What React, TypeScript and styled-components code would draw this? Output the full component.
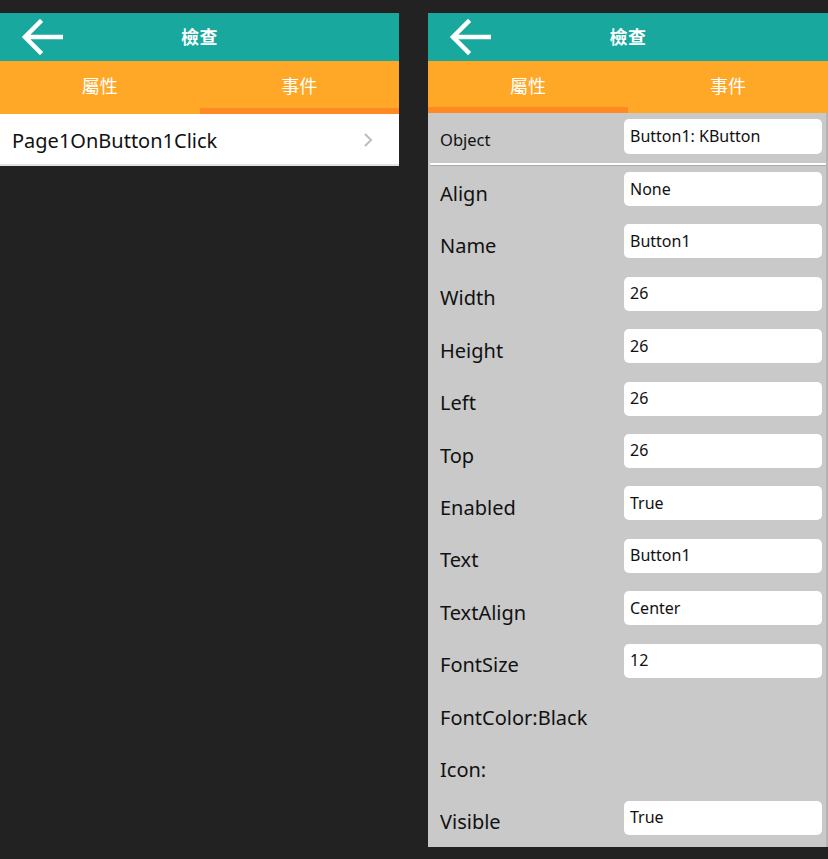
import React from "react";
import styled, { createGlobalStyle } from "styled-components";

const Global = createGlobalStyle`
  html, body { margin: 0; padding: 0; background: #222222; }
  body { font-family: "Noto Sans", "Noto Sans CJK TC", sans-serif; }
  * { box-sizing: border-box; }
`;

const Page = styled.div`
  display: flex;
  align-items: flex-start;
  gap: 29px;
  padding-top: 13px;
  width: 828px;
  height: 859px;
  overflow: hidden;
`;

const Panel = styled.div<{ $w: number }>`
  width: ${(p) => p.$w}px;
  display: flex;
  flex-direction: column;
`;

const Header = styled.div`
  position: relative;
  height: 48px;
  background: #18a89e;
  display: flex;
  align-items: center;
  justify-content: center;
`;

const BackBtn = styled.div`
  position: absolute;
  left: 20px;
  top: 5px;
  width: 44px;
  height: 38px;
  display: flex;
  align-items: center;
  justify-content: center;
`;

const Title = styled.div`
  color: #ffffff;
  font-size: 18px;
  font-weight: 700;
  font-family: "Noto Sans CJK TC", "Noto Sans", sans-serif;
  letter-spacing: 0.5px;
  margin-top: -2px;
`;

const Tabs = styled.div<{ $h: number }>`
  height: ${(p) => p.$h}px;
  background: #ffa726;
  display: grid;
  grid-template-columns: 1fr 1fr;
`;

const Tab = styled.div<{ $active: boolean }>`
  display: flex;
  align-items: center;
  justify-content: center;
  padding-top: 1px;
  color: #ffffff;
  font-size: 18px;
  font-family: "Noto Sans CJK TC", "Noto Sans", sans-serif;
  border-bottom: 6px solid ${(p) => (p.$active ? "#ff8a24" : "transparent")};
`;

const EventRow = styled.div`
  height: 52px;
  background: #ffffff;
  border-bottom: 2px solid #e2e2e2;
  display: flex;
  align-items: center;
  justify-content: space-between;
  padding: 2px 26px 0 12px;
  color: #111;
  font-size: 20px;
`;

const Content = styled.div`
  background: #c9c9c9;
  display: flex;
  flex-direction: column;
  border-right: 2px solid #b4b4b4;
`;

const ObjectRow = styled.div`
  height: 50px;
  display: grid;
  grid-template-columns: 196px 198px;
  align-items: start;
  padding-top: 6px;
`;

const ObjectLabel = styled.div`
  padding-left: 12px;
  padding-top: 9px;
  font-size: 16.5px;
  color: #111;
`;

const Separator = styled.div`
  height: 3px;
  margin-left: 2px;
  background: #ffffff;
  border-bottom: 1px solid #a9a9a9;
`;

const PropRow = styled.div`
  height: 52.4px;
  display: grid;
  grid-template-columns: 196px 198px;
  align-items: center;
`;

const Label = styled.div`
  padding-left: 12px;
  padding-top: 2px;
  font-size: 20px;
  color: #111;
  white-space: nowrap;
`;

const Field = styled.div<{ $h: number }>`
  align-self: start;
  margin-top: 6px;
  height: ${(p) => p.$h}px;
  background: #ffffff;
  border-radius: 5px;
  padding: 0 6px 1px;
  display: flex;
  align-items: center;
  font-size: 16px;
  color: #111;
`;

const ObjectField = styled(Field)`
  margin-top: 0;
`;

const Arrow = () => (
  <svg width="42" height="38" viewBox="0 0 42 38">
    <path
      d="M40 19 H5 M19 4 L4 19 L19 34"
      fill="none"
      stroke="#fff"
      strokeWidth="4.5"
      strokeLinecap="square"
    />
  </svg>
);

const Chevron = () => (
  <svg width="10" height="16" viewBox="0 0 10 16">
    <path d="M2 2 L8 8 L2 14" fill="none" stroke="#bdbdbd" strokeWidth="2" />
  </svg>
);

const PanelHeader = ({ active, tabH }: { active: 0 | 1; tabH: number }) => (
  <>
    <Header>
      <BackBtn>
        <Arrow />
      </BackBtn>
      <Title>檢查</Title>
    </Header>
    <Tabs $h={tabH}>
      <Tab $active={active === 0}>屬性</Tab>
      <Tab $active={active === 1}>事件</Tab>
    </Tabs>
  </>
);

const props: [string, string | null][] = [
  ["Align", "None"],
  ["Name", "Button1"],
  ["Width", "26"],
  ["Height", "26"],
  ["Left", "26"],
  ["Top", "26"],
  ["Enabled", "True"],
  ["Text", "Button1"],
  ["TextAlign", "Center"],
  ["FontSize", "12"],
  ["FontColor:Black", null],
  ["Icon:", null],
  ["Visible", "True"],
];

export default function App() {
  return (
    <Page>
      <Global />
      <Panel $w={399}>
        <PanelHeader active={1} tabH={53} />
        <EventRow>
          <span>Page1OnButton1Click</span>
          <Chevron />
        </EventRow>
      </Panel>
      <Panel $w={400}>
        <PanelHeader active={0} tabH={52} />
        <Content>
          <ObjectRow>
            <ObjectLabel>Object</ObjectLabel>
            <ObjectField $h={35}>Button1: KButton</ObjectField>
          </ObjectRow>
          <Separator />
          {props.map(([label, value]) => (
            <PropRow key={label}>
              <Label>{label}</Label>
              {value !== null ? <Field $h={34}>{value}</Field> : <span />}
            </PropRow>
          ))}
        </Content>
      </Panel>
    </Page>
  );
}
